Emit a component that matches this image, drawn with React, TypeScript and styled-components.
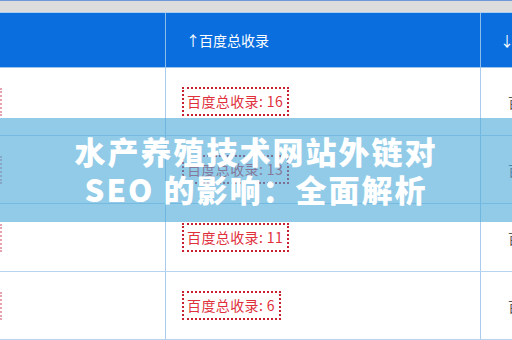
import React from "react";
import styled, { createGlobalStyle } from "styled-components";

const Global = createGlobalStyle`
  html, body { margin: 0; padding: 0; background: #ffffff; }
  body { font-family: "Noto Sans CJK SC", "Liberation Sans", sans-serif; }
`;

const Page = styled.div`
  position: relative;
  width: 512px;
  height: 340px;
  overflow: hidden;
  background: #ffffff;
`;

const TopStrip = styled.div`
  height: 11px;
  background: #dcdcdc;
  border-top: 1px solid #6f98d8;
  border-bottom: 1px solid #a9cff0;
`;

const Grid = styled.div`
  display: grid;
  grid-template-columns: 166px 315px 1fr;
`;

const HeaderRow = styled(Grid)`
  height: 55px;
  background: #0a6edf;
  border-bottom: 1px solid #9cc6ee;
  box-sizing: border-box;
`;

const HeaderCell = styled.div<{ $last?: boolean }>`
  display: flex;
  align-items: center;
  padding-left: 20px;
  color: #ffffff;
  font-size: 14px;
  border-right: ${(p) => (p.$last ? "none" : "1px solid #8dbbea")};
  white-space: nowrap;
  overflow: hidden;
`;

const Arrow = styled.span`
  margin-right: -1px;
`;

const RightHeaderCell = styled(HeaderCell)`
  padding-left: 19px;
`;

const Row = styled(Grid)`
  height: 68px;
  box-sizing: border-box;
  border-bottom: 1px solid #b6d4ef;
`;

const Cell = styled.div<{ $last?: boolean }>`
  display: flex;
  align-items: center;
  border-right: ${(p) => (p.$last ? "none" : "1px solid #a9cbee")};
  overflow: hidden;
  white-space: nowrap;
`;

const MidCell = styled(Cell)`
  padding-left: 16px;
`;

const LeftCell = styled(Cell)`
  justify-content: flex-start;
`;

const LeftBadgeEdge = styled.div`
  width: 2px;
  height: 28px;
  border-right: 2px dotted #e7a3ad;
  box-sizing: border-box;
`;

const RightCell = styled(Cell)`
  padding-left: 27px;
  color: #555555;
  font-size: 14px;
`;

const Badge = styled.span`
  display: inline-block;
  border: 2px dotted #c8202e;
  padding: 3px 4px 4px 3px;
  color: #e0303c;
  font-size: 14px;
  letter-spacing: 0.4px;
  line-height: 18px;
  font-family: "Noto Sans CJK SC", "Liberation Sans", sans-serif;
`;

const Overlay = styled.div`
  position: absolute;
  left: 0;
  right: 0;
  top: 118px;
  height: 104px;
  background: rgba(73, 168, 215, 0.6);
  display: flex;
  flex-direction: column;
  align-items: center;
  justify-content: center;
`;

const TitleLine = styled.div`
  color: #ffffff;
  font-family: "Noto Sans CJK SC", sans-serif;
  font-weight: 900;
  font-size: 31px;
  letter-spacing: 2px;
  line-height: 38px;
  white-space: nowrap;
`;

const counts = [16, 13, 11, 6];

export default function App() {
  return (
    <Page>
      <Global />
      <TopStrip />
      <HeaderRow>
        <HeaderCell />
        <HeaderCell>
          <Arrow>↑</Arrow>百度总收录
        </HeaderCell>
        <RightHeaderCell $last>
          <Arrow>↓</Arrow>权重
        </RightHeaderCell>
      </HeaderRow>
      {counts.map((n) => (
        <Row key={n}>
          <LeftCell>
            <LeftBadgeEdge />
          </LeftCell>
          <MidCell>
            <Badge>百度总收录: {n}</Badge>
          </MidCell>
          <RightCell $last>百度权重</RightCell>
        </Row>
      ))}
      <Overlay>
        <TitleLine>水产养殖技术网站外链对</TitleLine>
        <TitleLine>SEO 的影响：全面解析</TitleLine>
      </Overlay>
    </Page>
  );
}
